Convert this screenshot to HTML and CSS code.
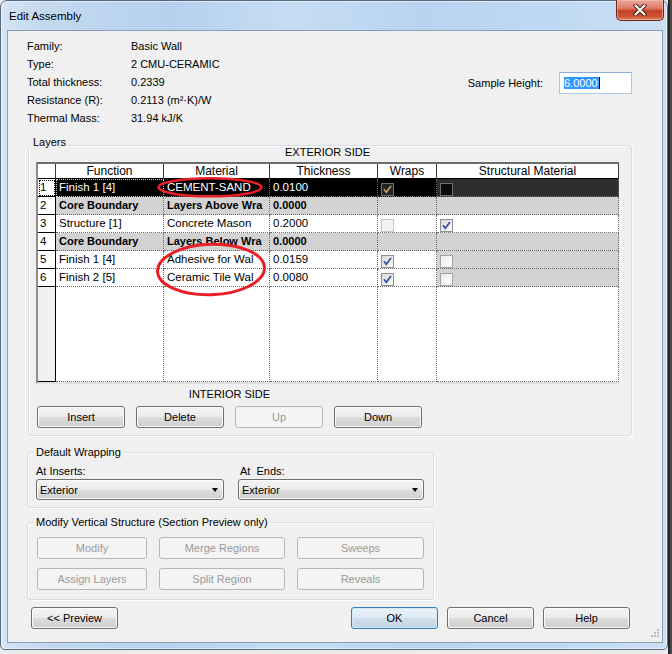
FILE: index.html
```html
<!DOCTYPE html>
<html>
<head>
<meta charset="utf-8">
<title>Edit Assembly</title>
<link rel="stylesheet" href="styles.css">
</head>
<body>
<div class="window">
  <div class="titlebar">
    <span class="title">Edit Assembly</span>
    <div class="close">
      <svg width="14" height="12" viewBox="0 0 14 12">
        <path d="M2.5 1.5 L11.5 10.5 M11.5 1.5 L2.5 10.5" stroke="#4a1a12" stroke-width="4.2" stroke-linecap="round" fill="none"/>
        <path d="M2.5 1.5 L11.5 10.5 M11.5 1.5 L2.5 10.5" stroke="#ffffff" stroke-width="2.2" stroke-linecap="round" fill="none"/>
      </svg>
    </div>
  </div>
  <div class="client">
    <div class="info">
      <div class="props">
        <span>Family:</span><span>Basic Wall</span>
        <span>Type:</span><span>2 CMU-CERAMIC</span>
        <span>Total thickness:</span><span>0.2339</span>
        <span>Resistance (R):</span><span>0.2113 (m²·K)/W</span>
        <span>Thermal Mass:</span><span>31.94 kJ/K</span>
      </div>
      <div class="sample">
        <span>Sample Height:</span>
        <div class="textbox"><span class="selected">6.0000</span><span class="caret"></span></div>
      </div>
    </div>

    <div class="group layers">
      <div class="gtitle">Layers</div>
      <div class="side-ext">EXTERIOR SIDE</div>
      <div class="grid">
        <div class="h hn"></div><div class="h">Function</div><div class="h">Material</div><div class="h">Thickness</div><div class="h">Wraps</div><div class="h">Structural Material</div>

        <div class="n focus">1</div><div class="c sel focusw">Finish 1 [4]</div><div class="c sel">CEMENT-SAND</div><div class="c sel">0.0100</div><div class="c sel"><i class="cb inv"><svg width="11" height="11" viewBox="0 0 11 11"><path d="M2 5.2 L4.3 8.3 L9 2" stroke="#b39b5e" stroke-width="1.8" fill="none"/></svg></i></div><div class="c dk"><i class="cb invoff"></i></div>

        <div class="n">2</div><div class="c gray b">Core Boundary</div><div class="c gray b">Layers Above Wra</div><div class="c gray b">0.0000</div><div class="c gray"></div><div class="c gray"></div>

        <div class="n">3</div><div class="c">Structure [1]</div><div class="c">Concrete Mason</div><div class="c">0.2000</div><div class="c"><i class="cb dis"></i></div><div class="c"><i class="cb"><svg width="11" height="11" viewBox="0 0 11 11"><path d="M2 5.2 L4.3 8.3 L9 2" stroke="#3b53a3" stroke-width="1.8" fill="none"/></svg></i></div>

        <div class="n">4</div><div class="c gray b">Core Boundary</div><div class="c gray b">Layers Below Wra</div><div class="c gray b">0.0000</div><div class="c gray"></div><div class="c gray"></div>

        <div class="n">5</div><div class="c">Finish 1 [4]</div><div class="c">Adhesive for Wal</div><div class="c">0.0159</div><div class="c"><i class="cb"><svg width="11" height="11" viewBox="0 0 11 11"><path d="M2 5.2 L4.3 8.3 L9 2" stroke="#3b53a3" stroke-width="1.8" fill="none"/></svg></i></div><div class="c gray"><i class="cb off"></i></div>

        <div class="n">6</div><div class="c">Finish 2 [5]</div><div class="c">Ceramic Tile Wal</div><div class="c">0.0080</div><div class="c"><i class="cb"><svg width="11" height="11" viewBox="0 0 11 11"><path d="M2 5.2 L4.3 8.3 L9 2" stroke="#3b53a3" stroke-width="1.8" fill="none"/></svg></i></div><div class="c gray"><i class="cb off"></i></div>

        <div class="n fill"></div><div class="c"></div><div class="c"></div><div class="c"></div><div class="c"></div><div class="c"></div>
      </div>
      <div class="bottomctl">
        <div class="side-int">INTERIOR SIDE</div>
        <div class="btnrow">
          <button class="btn">Insert</button>
          <button class="btn">Delete</button>
          <button class="btn dis">Up</button>
          <button class="btn">Down</button>
        </div>
      </div>
    </div>

    <div class="group wrap">
      <div class="gtitle">Default Wrapping</div>
      <div class="wrow">
        <div class="wcol">
          <span class="lbl">At Inserts:</span>
          <div class="combo"><span>Exterior</span><i class="arrow"></i></div>
        </div>
        <div class="wcol wcol2">
          <span class="lbl">At&nbsp; Ends:</span>
          <div class="combo"><span>Exterior</span><i class="arrow"></i></div>
        </div>
      </div>
    </div>

    <div class="group modify">
      <div class="gtitle">Modify Vertical Structure (Section Preview only)</div>
      <div class="mgrid">
        <button class="btn dis">Modify</button>
        <button class="btn dis">Merge Regions</button>
        <button class="btn dis">Sweeps</button>
        <button class="btn dis">Assign Layers</button>
        <button class="btn dis">Split Region</button>
        <button class="btn dis">Reveals</button>
      </div>
    </div>

    <div class="footer">
      <button class="btn">&lt;&lt; Preview</button>
      <button class="btn def ok">OK</button>
      <button class="btn">Cancel</button>
      <button class="btn">Help</button>
    </div>

    <svg class="grip" width="11" height="11" viewBox="0 0 11 11">
      <g fill="#b9b9b9">
        <rect x="8" y="0" width="2" height="2"/>
        <rect x="5" y="3" width="2" height="2"/><rect x="8" y="3" width="2" height="2"/>
        <rect x="2" y="6" width="2" height="2"/><rect x="5" y="6" width="2" height="2"/><rect x="8" y="6" width="2" height="2"/>
      </g>
    </svg>
  </div>
</div>

<svg class="annot" width="672" height="654" viewBox="0 0 672 654">
  <ellipse cx="210" cy="187.3" rx="51.5" ry="9" fill="none" stroke="#e81f27" stroke-width="2.6"/>
  <ellipse cx="211" cy="269.5" rx="53.5" ry="25.2" fill="none" stroke="#e81f27" stroke-width="3" transform="rotate(-2 211 269.5)"/>
</svg>
</body>
</html>
```

FILE: styles.css
```css
* { box-sizing: border-box; }
html, body { margin: 0; padding: 0; }
body {
  width: 672px;
  height: 654px;
  overflow: hidden;
  position: relative;
  font-family: "Liberation Sans", Arial, sans-serif;
  font-size: 11px;
  color: #000;
  background: linear-gradient(90deg, #ebebeb 0, #ebebeb 668px, #262626 668px, #262626 670px, #4a4a4a 670px);
}

.window {
  width: 668px;
  height: 650px;
  border: 1px solid #56697e;
  border-radius: 7px 7px 5px 5px;
  padding: 0 4px 6px 6px;
  display: flex;
  flex-direction: column;
  background: linear-gradient(90deg, #d6e5f3 0, #c4d9ef 40px, #b6d1ef 170px, #c6dcf3 290px, #b9d4f1 420px, #c0d9f3 560px, #cde0f4 668px);
  box-shadow: inset 0 0 0 1px rgba(255,255,255,0.5);
}

.titlebar {
  height: 29px;
  flex: none;
  display: flex;
  align-items: flex-start;
}
.title {
  margin: 7px 0 0 2px;
  line-height: 16px;
  font-size: 11.5px;
}
.close {
  margin: -1px -1px 0 auto;
  width: 48px;
  height: 21px;
  border: 1px solid #6a2a20;
  border-top: none;
  border-radius: 0 0 5px 5px;
  background: linear-gradient(#e9a898 0%, #dd7e6a 40%, #c63f26 55%, #cf5638 85%, #de8a6a 100%);
  box-shadow: inset 0 0 0 1px rgba(255,210,200,0.45);
  display: flex;
  align-items: center;
  justify-content: center;
}
.close svg { display: block; }

.client {
  flex: none;
  height: 613px;
  background: #f0f0f0;
  border: 1px solid #8c9db1;
  padding: 6px 30px 0 19px;
  display: flex;
  flex-direction: column;
  position: relative;
}

/* info block */
.info { display: flex; height: 90px; flex: none; }
.props {
  display: grid;
  grid-template-columns: 104px auto;
  grid-auto-rows: 18px;
  line-height: 18px;
}
.sample {
  margin-left: auto;
  margin-top: 35px;
  height: 22px;
  display: flex;
  align-items: center;
  gap: 16px;
}
.textbox {
  width: 73px;
  height: 22px;
  background: #fff;
  border: 1px solid #abc8e6;
  border-top-color: #8aaed3;
  padding: 4px 0 0 4px;
  display: flex;
  align-items: flex-start;
}
.selected {
  background: #3399ff;
  color: #fff;
  line-height: 12px;
  padding: 0 1px 0 0;
}
.caret { width: 1px; height: 12px; background: #000; }

/* group boxes */
.group {
  flex: none;
  border: 1px solid #d3dde3;
  border-radius: 3px;
  box-shadow: inset 1px 1px 0 #fbfbfb, 1px 1px 0 #fbfbfb;
}
.gtitle {
  width: fit-content;
  line-height: 14px;
  padding: 0 2px;
  background: #f0f0f0;
  white-space: nowrap;
}

.layers { margin: 18px 0 0 1px; padding: 0 12px 7px 7px; }
.layers .gtitle { margin: -11px 0 -3px -5px; }
.side-ext { line-height: 13px; text-align: center; margin-bottom: 3px; }

.grid {
  width: 583px;
  display: grid;
  grid-template-columns: 18px 108px 106px 108px 59px 182px;
  grid-template-rows: 15px repeat(6, 18px) 95px;
  border-left: 2px solid #8d8d8d;
  border-top: 2px solid #6b6b6b;
  border-bottom: 2px solid #e1e1e1;
  background: #fff;
  font-size: 11.5px;
}
.h {
  background: #fff;
  border-right: 1px solid #3a3a3a;
  border-bottom: 1px solid #000;
  text-align: center;
  font-size: 12px;
  line-height: 14px;
  white-space: nowrap;
  overflow: hidden;
}
.n {
  background: #fff;
  border-right: 1px solid #000;
  border-bottom: 1px solid #000;
  padding-left: 2px;
  line-height: 17px;
}
.n.fill { background: #f0f0f0; }
.n.focus { outline: 1px dotted #000; outline-offset: -2px; }
.c {
  border-right: 1px dotted #6a6a6a;
  border-bottom: 1px dotted #6a6a6a;
  padding-left: 3px;
  line-height: 17px;
  white-space: nowrap;
  overflow: hidden;
}
.c.sel { background: #000; color: #fff; }
.c.focusw { outline: 1px dotted #cfcfcf; outline-offset: -1px; }
.c.dk { background: #2e2e2e; }
.c.gray { background: #d3d3d3; }
.c.b { font-weight: bold; font-size: 11px; }

.cb {
  display: block;
  width: 13px;
  height: 13px;
  margin: 4px 0 0 0;
  border: 1px solid #8e8f8f;
  background: linear-gradient(135deg, #d9d9d9, #fdfdfd);
}
.cb svg { display: block; }
.cb.dis { border-color: #c6c6c6; background: #f3f3f3; }
.cb.off { border-color: #a3a3a3; background: linear-gradient(135deg, #ececec, #ffffff); }
.cb.inv { border-color: #6f6f6f; background: #232323; }
.cb.invoff { border-color: #6f6f6f; background: #0b0b0b; }

.bottomctl {
  width: fit-content;
  margin-left: 1px;
  display: flex;
  flex-direction: column;
  align-items: center;
}
.side-int { line-height: 13px; margin-top: 4px; }
.btnrow { display: flex; gap: 11px; margin-top: 5px; }
.btnrow .btn { width: 88px; }

/* buttons */
.btn {
  height: 22px;
  margin: 0;
  padding: 0;
  border: 1px solid #707070;
  border-radius: 3px;
  background: linear-gradient(#f3f3f3 0%, #ebebeb 50%, #dddddd 50%, #cfcfcf 100%);
  box-shadow: inset 0 0 0 1px #fafafa;
  font-family: "Liberation Sans", Arial, sans-serif;
  font-size: 11px;
  color: #000;
  display: flex;
  align-items: center;
  justify-content: center;
}
.btn.dis {
  border-color: #b4b8bb;
  background: #f4f4f4;
  box-shadow: none;
  color: #9b9b9b;
}
.btn.def {
  border-color: #3c7fb1;
  background: linear-gradient(#eaf2f9 0%, #dfeaf4 50%, #cfdeeb 50%, #c3d5e6 100%);
  box-shadow: inset 0 0 0 1px #cfe9f8;
}

/* default wrapping */
.wrap { margin-top: 16px; width: 407px; padding: 0 0 7px 8px; }
.wrap .gtitle { margin: -8px 0 0 -2px; }
.wrow { display: flex; margin-top: 5px; }
.wcol { display: flex; flex-direction: column; }
.lbl { line-height: 14px; margin-bottom: 1px; }
.wcol2 { margin-left: 14px; }
.wcol2 .lbl { padding-left: 2px; }
.combo {
  width: 188px;
  height: 21px;
  border: 1px solid #707070;
  border-radius: 3px;
  background: linear-gradient(#f3f3f3 0%, #ebebeb 50%, #dddddd 50%, #cfcfcf 100%);
  box-shadow: inset 0 0 0 1px #fafafa;
  display: flex;
  align-items: center;
  padding: 0 5px 0 3px;
}
.wcol2 .combo { width: 186px; }
.arrow {
  margin-left: auto;
  width: 0;
  height: 0;
  border-top: 4px solid #000;
  border-left: 3.5px solid transparent;
  border-right: 3.5px solid transparent;
}

/* modify vertical structure */
.modify { margin-top: 14px; width: 407px; padding: 0 0 9px 9px; }
.modify .gtitle { margin: -8px 0 0 -3px; }
.mgrid {
  display: grid;
  grid-template-columns: 110px 126px 127px;
  column-gap: 12px;
  row-gap: 9px;
  margin-top: 8px;
}

/* footer */
.footer {
  flex: none;
  display: flex;
  gap: 9px;
  margin-top: 7px;
  padding: 0 2px 0 4px;
}
.footer .btn { width: 87px; }
.footer .ok { margin-left: auto; }

.grip { position: absolute; right: 2px; bottom: 2px; display: block; }

.annot { position: absolute; left: 0; top: 0; pointer-events: none; }
```
